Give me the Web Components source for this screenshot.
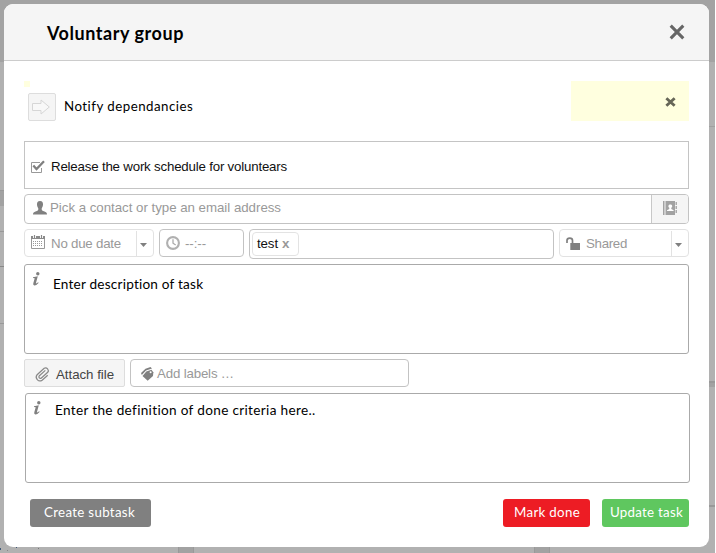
<!DOCTYPE html>
<html lang="en">
<head>
<meta charset="utf-8">
<title>Voluntary group</title>
<style>
html,body{margin:0;height:553px;overflow:hidden;background:#fff}
body{font:13.300px/16px "Liberation Sans",Arial,sans-serif;color:#111}
</style>
</head>
<body>
<task-page></task-page>
<script>
const define=(name,html,setup)=>customElements.define(name,class extends HTMLElement{
  constructor(){super();this.attachShadow({mode:'open'}).innerHTML=html;}
  connectedCallback(){if(setup)setup.call(this,this.shadowRoot);}
});

const icons={
 close:['0 0 16 16','<path d="M1.700 1.700 14.300 14.300M14.300 1.700 1.700 14.300" fill="none" stroke="currentColor" stroke-width="3.100"/>'],
 closeSmall:['0 0 12 12','<path d="M1.500 1.500 10.500 10.500M10.500 1.500 1.500 10.500" fill="none" stroke="currentColor" stroke-width="3"/>'],
 arrow:['0 0 18 16','<path d="M.5 4.500H9V1L17.300 8 9 15V11.500H.5Z" fill="#f8f8f8" stroke="#d6d6d6"/>'],
 check:['0 0 14 13','<path d="M9 2.500H.5v10h10V8" fill="none" stroke="#999"/><path d="M2.300 5.500 5.500 9 13 1.200" fill="none" stroke="#808080" stroke-width="2.300"/>'],
 person:['0 0 14 14','<path d="M7 0C4.600 0 3.900 1.700 4 3.700 4.100 5.600 5 6.500 5.300 7.500 5.500 9.400 4.600 9.800 2.500 10.600 1 11.200 0 11.500 0 13.500H14C14 11.500 13 11.200 11.500 10.600 9.400 9.800 8.500 9.400 8.700 7.500 9 6.500 9.900 5.600 10 3.700 10.100 1.700 9.400 0 7 0Z" fill="#808080"/>'],
 book:['0 0 14 15','<path d="M0 0h1.500v14H0zM2.500 0H12v14H2.500z" fill="#a2a2a2"/><path d="M12.500 1h1.500v3h-1.500zM12.500 5h1.500v3h-1.500zM12.500 9h1.500v3h-1.500z" fill="#aaa"/><path d="M7.300 3.500a1.700 1.700 0 0 0-1 3.200V8L4 9.300V10h6.600v-.7L8.300 8V6.700a1.700 1.700 0 0 0-1-3.200" fill="#fff"/>'],
 calendar:['0 0 14 14','<path d="M.5 2.500h13v11H.5z" fill="#fff" stroke="#999"/><path d="M0 1h14v3H0z" fill="#8a8a8a"/><path d="M3.500 0v3M10.500 0v3" stroke="#fff" stroke-width="3"/><path d="M3.500 0v3M10.500 0v3" stroke="#888" stroke-width="1.200"/><path d="M2 6.500h10M2 8.500h10M2 10.500h10" stroke="#999" stroke-dasharray="1 1"/>'],
 clock:['0 0 14 14','<circle cx="7" cy="7" r="5.900" fill="none" stroke="#b0b0b0" stroke-width="2.100"/><path d="M7 3.200V7.200L9.700 9" fill="none" stroke="#aaa" stroke-width="1.300"/>'],
 lock:['0 0 14 13','<path d="M4.300 6h9.700v7H4.300z" fill="#808080"/><path d="M1 6V3.500C1 .3 6.500.3 6.500 3.500V6" fill="none" stroke="#808080" stroke-width="1.700"/>'],
 info:['0 0 8 14','<circle cx="5.800" cy="1.700" r="1.700" fill="#808080"/><path d="M1 5.300 5.800 4.300 3.900 11.200Q3.900 12 6.300 10.300L6.500 10.900Q4 13.600 2.300 13.400.8 13.200 1.300 11.300L2.700 6.300 1 6Z" fill="#808080"/>'],
 clip:['0 0 14 13','<g transform="rotate(-42 7 6.500)"><path d="M11.500 5H3.500a1.500 1.500 0 0 0 0 3H12A2.700 2.700 0 0 0 12 2.700H2.500A3.800 3.800 0 0 0 2.500 10.200H10" fill="none" stroke="#888" stroke-width="1.200"/></g>'],
 tags:['0 0 13 14','<path d="M5.300 4.500 10.500 2.800 12.300 5.300 12 9 6.700 13.800 1.500 9Z" fill="#808080"/><path d="M0 6 4.500 1.700 9.500 0 11 1.400 5 3.400.8 8Z" fill="#808080"/><circle cx="9.600" cy="5.300" r="1" fill="#fff"/>'],
 caret:['0 0 7 4','<path d="M0 0h7L3.500 4Z" fill="#808080"/>']
};
define('ui-icon','<style>:host{display:block;flex:none}svg{display:block;width:100%;height:100%;overflow:visible}</style>',function(root){
  const [box,body]=icons[this.getAttribute('name')];
  root.innerHTML+=`<svg viewBox="${box}" preserveAspectRatio="none">${body}</svg>`;
});

/* A single line whose letter spacing is tuned so that it fills the given width. */
define('ui-text','<style>:host{display:block;flex:none;white-space:nowrap;line-height:16px}span{display:inline-block}</style><span><slot></slot></span>',function(root){
  const s=root.querySelector('span'),w=+this.getAttribute('w');
  s.style.letterSpacing=((w-s.getBoundingClientRect().width)/this.textContent.length)+'px';
});

define('ui-field',`<style>
:host{display:flex;box-sizing:border-box;height:28px;border:1px solid #c3c3c3;border-radius:4px;background:#fff;color:#999;align-items:flex-start}
</style><slot></slot>`);

define('ui-drop',`<style>
:host{display:flex;box-sizing:border-box;width:130px;height:28px;border:1px solid #e2e2e2;border-radius:4px;color:#999}
.main{flex:1;display:flex;align-items:flex-start}
.end{width:17px;margin:1px 0 0;border-left:1px solid #e2e2e2;padding:12px 0 0 3px;box-sizing:border-box}
ui-icon{width:7px;height:4px}
</style><div class="main"><slot></slot></div><div class="end"><ui-icon name="caret"></ui-icon></div>`);

define('ui-note',`<style>
:host{display:flex;box-sizing:border-box;width:665px;height:90px;border:1px solid #aaa;border-radius:3px;color:#000;font:13.600px/16px Lato,sans-serif}
ui-icon{width:8px;height:14px;margin:7px 0 0 7px}
</style><ui-icon name="info"></ui-icon><slot></slot>`);

define('ui-button',`<style>
:host{display:flex;box-sizing:border-box;height:28px;border-radius:3px;background:var(--fill);color:#fff;font:13.300px/16px Lato,sans-serif;padding-top:5px}
</style><slot></slot>`);

define('task-header',`<style>
:host{display:flex;justify-content:space-between;box-sizing:border-box;height:57px;border-bottom:1px solid #ccc;background:#f5f5f5;padding:21px 24px 0 43px;font:bold 18px/16px Lato,sans-serif;color:#000}
ui-icon{width:16px;height:16px;margin-top:-1px;color:#666}
</style><slot></slot><ui-icon name="close"></ui-icon>`);

define('task-notify',`<style>
:host{display:flex;height:40px}
.dot{width:6px;height:6px;background:#ffffdf}
.box{display:grid;place-items:center;box-sizing:border-box;width:28px;height:28px;margin:12px 0 0 -2px;border:1px solid #ddd;border-radius:2px;background:#f5f5f5}
.box ui-icon{width:18px;height:16px;margin-right:2px}
ui-text{margin:17px 0 0 8px;font:13.300px/16px Lato,sans-serif;color:#000}
.alert{margin-left:auto;width:118px;background:#ffffdf;box-sizing:border-box;padding:16px 0 0 94px}
.alert ui-icon{width:11px;height:10px;color:#666657}
</style><div class="dot"></div><div class="box"><ui-icon name="arrow"></ui-icon></div><ui-text w="129.500">Notify dependancies</ui-text><div class="alert"><ui-icon name="closeSmall"></ui-icon></div>`);

define('task-dialog',`<style>
:host{display:flex;flex-direction:column;box-sizing:border-box;width:705px;height:543px;border-radius:9px;overflow:hidden;background:#fff}
main{display:flex;flex-direction:column;padding:20px 20px 0;width:665px}
.row{display:flex;gap:5px}
.release{display:flex;box-sizing:border-box;height:48px;margin-top:20px;border:1px solid #c4c4c4}
.release ui-icon{width:14px;height:13px;margin:18px 0 0 6px}
.release ui-text{margin:17px 0 0 6px;color:#111}
.contact{height:30px;margin-top:5px}
.contact>ui-icon{width:14px;height:14px;margin:6px 0 0 8px}
.contact ui-text{margin:5px 0 0 3px}
.book{margin-left:auto;width:36px;height:28px;background:#f5f5f5;border-left:1px solid #c8c8c8;border-radius:0 3px 3px 0}
.book ui-icon{width:14px;height:15px;margin:6px 0 0 11px}
.chip{display:flex;box-sizing:border-box;width:47px;height:24px;border:1px solid #e3e3e3;border-radius:4px;margin:2px;padding:3px 0 0 4px;color:#111}
.chip b{margin-left:4px;color:#999}
footer{display:flex;margin-top:16px;padding-left:6px}
</style>
<task-header><ui-text w="137">Voluntary group</ui-text></task-header>
<main>
<task-notify></task-notify>
<div class="release"><ui-icon name="check"></ui-icon><ui-text w="236">Release the work schedule for voluntears</ui-text></div>
<ui-field class="contact"><ui-icon name="person"></ui-icon><ui-text w="231">Pick a contact or type an email address</ui-text><div class="book"><ui-icon name="book"></ui-icon></div></ui-field>
<div class="row" style="margin-top:5px;height:30px">
<ui-drop><ui-icon name="calendar" style="width:14px;height:14px;margin:5px 0 0 6px"></ui-icon><ui-text w="70" style="margin:6px 0 0 6px">No due date</ui-text></ui-drop>
<ui-field style="width:85px"><ui-icon name="clock" style="width:14px;height:14px;margin:6px 0 0 6px"></ui-icon><ui-text w="21" style="margin:6px 0 0 5px">--:--</ui-text></ui-field>
<ui-field style="width:305px;height:30px"><div class="chip"><ui-text w="21">test</ui-text><b><ui-text w="7">x</ui-text></b></div></ui-field>
<ui-drop><ui-icon name="lock" style="width:14px;height:13px;margin:7px 0 0 6px"></ui-icon><ui-text w="41" style="margin:6px 0 0 6px">Shared</ui-text></ui-drop>
</div>
<ui-note style="margin-top:5px"><ui-text w="150.500" style="margin:11px 0 0 13px">Enter description of task</ui-text></ui-note>
<div class="row" style="margin-top:5px">
<ui-field style="width:101px;border-color:#ddd;border-radius:2px;background:#f5f5f5;color:#444"><ui-icon name="clip" style="width:14px;height:13px;margin:8px 0 0 11px"></ui-icon><ui-text w="58" style="margin:7px 0 0 6px">Attach file</ui-text></ui-field>
<ui-field style="width:279px"><ui-icon name="tags" style="width:13px;height:14px;margin:7px 0 0 10px"></ui-icon><ui-text w="77" style="margin:6px 0 0 3px">Add labels …</ui-text></ui-field>
</div>
<ui-note style="margin:6px 0 0 1px"><ui-text w="260.500" style="margin:8px 0 0 14px">Enter the definition of done criteria here..</ui-text></ui-note>
<footer>
<ui-button style="--fill:#808080;width:121px;padding-left:14px"><ui-text w="91">Create subtask</ui-text></ui-button>
<ui-button style="--fill:#ed1c24;width:87px;margin-left:352px;padding-left:11px"><ui-text w="66">Mark done</ui-text></ui-button>
<ui-button style="--fill:#5fc75f;width:87px;margin-left:12px;padding-left:8px"><ui-text w="73">Update task</ui-text></ui-button>
</footer>
</main>`);

/* Dimmed board behind the dialog. */
define('task-page',`<style>
:host{display:block;box-sizing:border-box;width:715px;height:553px;padding:4px;background:
linear-gradient(#3f5878,#3f5878) 0 548px/1px 2px no-repeat,
linear-gradient(#3f5878,#3f5878) 16px 547px/1px 1px no-repeat,
linear-gradient(#888,#888) 7px 550px/1px 1px no-repeat,
linear-gradient(#777,#777) 38px 548px/1px 1px no-repeat,
linear-gradient(#999,#999) 178px 547px/1px 6px no-repeat,
linear-gradient(#a2a2a2,#a2a2a2) 179px 547px/14px 6px no-repeat,
linear-gradient(#999,#999) 193px 547px/1px 6px no-repeat,
linear-gradient(#999,#999) 534px 547px/1px 6px no-repeat,
linear-gradient(#a2a2a2,#a2a2a2) 535px 547px/14px 6px no-repeat,
linear-gradient(#999,#999) 549px 547px/1px 6px no-repeat,
linear-gradient(#a0a0a0,#a0a0a0) 709px 126px/6px 1px no-repeat,
linear-gradient(#999,#999) 709px 381px/6px 2px no-repeat,
linear-gradient(#a2a2a2,#a2a2a2) 709px 383px/6px 4px no-repeat,
linear-gradient(#999,#999) 709px 505px/6px 2px no-repeat,
linear-gradient(#999,#999) 0 190px/4px 1px no-repeat,
linear-gradient(#a2a2a2,#a2a2a2) 0 191px/4px 15px no-repeat,
linear-gradient(#999,#999) 0 231px/4px 1px no-repeat,
linear-gradient(#888,#888) 0 266px/4px 1px no-repeat,
linear-gradient(#999,#999) 0 323px/4px 1px no-repeat,
linear-gradient(#a3a3a3 62px,#b1b1b1 62px)}
</style><task-dialog></task-dialog>`);
</script>
</body>
</html>
